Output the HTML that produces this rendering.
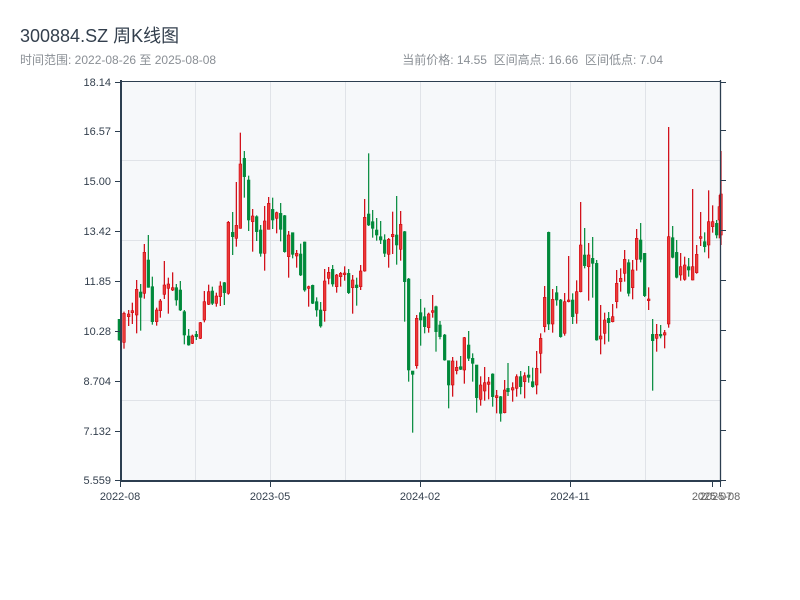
<!DOCTYPE html>
<html><head><meta charset="utf-8">
<style>
html,body{margin:0;padding:0;background:#fff;width:800px;height:600px;overflow:hidden}
body{font-family:"Liberation Sans","Noto Sans CJK SC",sans-serif;position:relative}
.t{position:absolute;left:20px;top:22px;font-size:18px;color:#333f4d}
.s{position:absolute;left:20px;top:51px;font-size:12px;color:#8a8f95}
.r{position:absolute;right:137px;top:51px;font-size:12px;color:#8a8f95;white-space:pre}
svg{position:absolute;left:0;top:0}
</style></head><body>
<div class="t">300884.SZ 周K线图</div>
<div class="s">时间范围: 2022-08-26 至 2025-08-08</div>
<div class="r">当前价格: 14.55  区间高点: 16.66  区间低点: 7.04</div>
<svg id="c" width="800" height="600" xmlns="http://www.w3.org/2000/svg" font-family="Liberation Sans, sans-serif" font-size="11" fill="#333">
<rect x="121" y="81" width="599" height="400" fill="#f6f8fa"/>
<g stroke="#e0e3e8" stroke-width="1">
<line x1="195.5" y1="81" x2="195.5" y2="481"/><line x1="270.5" y1="81" x2="270.5" y2="481"/>
<line x1="345.5" y1="81" x2="345.5" y2="481"/><line x1="420.5" y1="81" x2="420.5" y2="481"/>
<line x1="495.5" y1="81" x2="495.5" y2="481"/><line x1="570.5" y1="81" x2="570.5" y2="481"/>
<line x1="645.5" y1="81" x2="645.5" y2="481"/>
<line x1="121" y1="160.5" x2="720" y2="160.5"/><line x1="121" y1="240.5" x2="720" y2="240.5"/>
<line x1="121" y1="320.5" x2="720" y2="320.5"/><line x1="121" y1="400.5" x2="720" y2="400.5"/>
</g>
<g id="k"></g>
<g stroke="#2c3e50">
<line x1="121" y1="81.5" x2="721" y2="81.5" stroke-width="1"/>
<line x1="121" y1="80" x2="121" y2="482" stroke-width="2"/>
<line x1="120" y1="481" x2="721" y2="481" stroke-width="2"/>
<line x1="720.5" y1="80" x2="720.5" y2="482" stroke-width="1.3"/>
<g stroke-width="1">
<line x1="115" y1="82.5" x2="121" y2="82.5"/><line x1="115" y1="131.5" x2="121" y2="131.5"/>
<line x1="115" y1="181.5" x2="121" y2="181.5"/><line x1="115" y1="231.5" x2="121" y2="231.5"/>
<line x1="115" y1="281.5" x2="121" y2="281.5"/><line x1="115" y1="331.5" x2="121" y2="331.5"/>
<line x1="115" y1="381.5" x2="121" y2="381.5"/><line x1="115" y1="431.5" x2="121" y2="431.5"/>
<line x1="115" y1="480.5" x2="121" y2="480.5"/>
<line x1="720" y1="82.5" x2="726" y2="82.5"/><line x1="720" y1="130.5" x2="726" y2="130.5"/>
<line x1="720" y1="180.5" x2="726" y2="180.5"/><line x1="720" y1="230.5" x2="726" y2="230.5"/>
<line x1="720" y1="280.5" x2="726" y2="280.5"/><line x1="720" y1="330.5" x2="726" y2="330.5"/>
<line x1="720" y1="380.5" x2="726" y2="380.5"/><line x1="720" y1="430.5" x2="726" y2="430.5"/>
<line x1="720" y1="480.5" x2="726" y2="480.5"/>
<line x1="120.5" y1="481" x2="120.5" y2="487"/><line x1="270.5" y1="481" x2="270.5" y2="487"/>
<line x1="420.5" y1="481" x2="420.5" y2="487"/><line x1="570.5" y1="481" x2="570.5" y2="487"/>
<line x1="712.5" y1="481" x2="712.5" y2="487"/><line x1="720.5" y1="481" x2="720.5" y2="487"/>
</g></g>
<g text-anchor="end" fill="#333f4d">
<text x="111" y="86">18.14</text><text x="111" y="135">16.57</text><text x="111" y="185">15.00</text>
<text x="111" y="235">13.42</text><text x="111" y="285">11.85</text><text x="111" y="335">10.28</text>
<text x="111" y="385">8.704</text><text x="111" y="435">7.132</text><text x="111" y="484">5.559</text>
</g>
<g text-anchor="middle" fill="#333f4d">
<text x="120" y="500">2022-08</text><text x="270" y="500">2023-05</text>
<text x="420" y="500">2024-02</text><text x="570" y="500">2024-11</text>
<text x="712" y="500" fill="#666">2025-07</text><text x="720" y="500" fill="#666">2025-08</text>
</g>
</svg>
<script>
var Z=[
[110,120,[
[28,'g',598,662,598,660],[42,'r',575,686,580,667],[56,'r',570,618,582,590],[67,'r',548,612,572,578],
[80,'r',480,640,508,585],[92,'g',492,632,516,532],[103,'r',372,536,397,520],[115,'g',345,503,420,502],
[127,'g',470,614,500,605],[140,'r',563,617,570,605],[151,'r',537,593,543,572],[163,'r',423,537,495,523],
[175,'r',473,581,492,505],[188,'r',457,513,503,510],[199,'g',492,557,503,540],[211,'g',483,573,510,570],
[223,'g',570,673,575,645],[236,'g',627,677,648,675],[247,'r',644,672,648,670],[259,'g',633,660,643,650],
[271,'r',606,657,608,655],[283,'r',513,607,545,600],[296,'r',494,555,515,553],[307,'g',500,555,513,550],
[319,'r',518,560,528,550],[331,'r',484,558,498,530],[343,'g',486,555,488,518],[355,'r',303,524,307,520],
[368,'g',276,405,337,350],[379,'r',186,380,316,355],[391,'r',38,326,132,325],[403,'g',93,233,115,170],
[416,'g',167,333,180,300],[428,'r',267,395,288,305],[440,'g',286,363,290,335],[452,'g',315,410,330,400],
[464,'r',258,452,303,400],[476,'r',231,328,250,328],[488,'g',233,327,268,300],[500,'r',275,340,278,295],
[512,'g',249,364,280,328],[524,'g',285,398,287,395],[536,'r',333,473,345,410],[548,'g',338,415,338,403],
[560,'r',390,443,400,408],[572,'g',371,468,402,465],[584,'g',365,515,366,510],[596,'r',497,560,500,505],
[608,'g',494,552,496,550],[620,'g',532,590,545,570]]],
[310,140,[
[32,'g',486,563,510,558],[44,'r',387,545,423,512],[56,'r',381,433,397,415],[68,'g',375,440,388,432],
[80,'r',402,458,405,440],[92,'r',396,440,400,410],[104,'r',379,422,399,404],[116,'g',387,462,400,458],
[128,'r',405,521,420,443],[140,'g',413,497,435,443],[152,'r',375,450,393,440],[164,'r',177,395,232,393],
[176,'g',40,258,222,255],[188,'g',210,293,245,265],[200,'g',234,302,270,285],[212,'g',243,312,290,300],
[224,'g',283,351,300,340],[236,'r',294,383,298,343],[248,'r',215,342,283,290],[260,'g',168,374,285,315],
[272,'r',213,362,253,328],[284,'g',273,545,275,425],[296,'g',414,725,417,690],[308,'g',693,878,693,703],
[320,'r',525,686,535,677],[332,'g',477,617,518,540],[344,'g',503,580,530,560],[356,'r',518,578,522,563],
[368,'r',465,533,512,517],[378,'g',497,635,500,575],[390,'g',543,598,555,590],[404,'g',582,662,585,660],
[416,'g',662,805,662,735],[428,'r',651,770,663,735],[440,'r',662,703,682,692],[452,'g',648,690,680,688],
[463,'r',591,731,593,690],[476,'g',573,663,615,655],[488,'g',640,725,655,670],[500,'g',675,818,675,773],
[512,'r',709,797,735,778],[524,'r',681,782,728,753],[536,'r',711,778,726,733],[548,'g',700,800,702,770],
[560,'r',750,820,767,773],[572,'g',768,845,770,820],[584,'r',720,820,750,818],[594,'g',669,768,745,755],
[608,'r',727,785,743,750],[620,'r',703,770,710,745],[632,'g',693,763,710,740],[644,'r',697,775,707,725],
[656,'g',678,728,705,712]]],
[520,120,[
[38,'g',743,803,785,800],[50,'r',693,823,745,795],[62,'r',640,760,655,700],[74,'r',498,637,532,620],
[86,'g',335,630,337,612],[98,'r',507,638,538,612],[110,'g',498,557,518,540],[122,'g',537,653,540,650],
[134,'r',519,647,545,640],[146,'r',408,547,540,545],[158,'g',520,612,540,590],[170,'r',481,611,515,580],
[182,'r',246,517,375,515],[194,'g',324,445,405,437],[206,'r',369,542,405,440],[218,'g',351,533,415,430],
[230,'g',420,662,430,660],[242,'r',555,703,648,657],[254,'r',578,673,600,640],[266,'g',576,665,595,608],
[278,'r',552,607,590,605],[290,'r',450,565,490,545],[302,'r',445,515,475,485],[314,'r',390,485,418,460],
[326,'g',418,529,428,520],[338,'r',420,538,450,503],[350,'r',327,452,355,418],[362,'g',309,427,360,418],
[374,'g',399,531,400,527],[386,'r',502,570,537,542],[398,'g',597,812,643,662],[410,'r',612,695,643,655],
[422,'g',615,655,643,648],[434,'r',630,685,638,645],[446,'r',21,623,350,612],[458,'g',318,415,353,412],
[470,'g',360,475,397,472],[482,'r',399,482,440,465],[494,'r',410,482,435,478],[506,'g',414,470,440,450],
[518,'r',207,481,440,480],[530,'r',375,461,403,458],[542,'r',276,378,350,355],[554,'g',337,397,365,380],
[566,'r',211,415,305,375],[578,'r',256,338,305,320],[590,'g',300,355,310,345],[598,'r',225,355,260,300],
[603,'r',93,375,222,345]]]];
var g=document.getElementById('k'),h='';
Z.forEach(function(z){var ox=z[0],oy=z[1];z[2].forEach(function(c){
var x=ox+c[0]/3,wt=oy+c[2]/3,wb=oy+c[3]/3,bt=oy+c[4]/3,bb=oy+c[5]/3;
var col=c[1]=='r'?'#d0020c':'#00893a',fill=c[1]=='r'?'#ea3a38':'#00893a';
if(bb-bt<1)bb=bt+1;
h+='<rect x="'+(x-0.6)+'" y="'+wt+'" width="1.2" height="'+(wb-wt)+'" fill="'+col+'"/>';
h+='<rect x="'+(x-1.3)+'" y="'+bt+'" width="2.6" height="'+(bb-bt)+'" fill="'+fill+'" stroke="'+col+'" stroke-width="0.6"/>';
});});
g.innerHTML=h;
</script>
</body></html>
